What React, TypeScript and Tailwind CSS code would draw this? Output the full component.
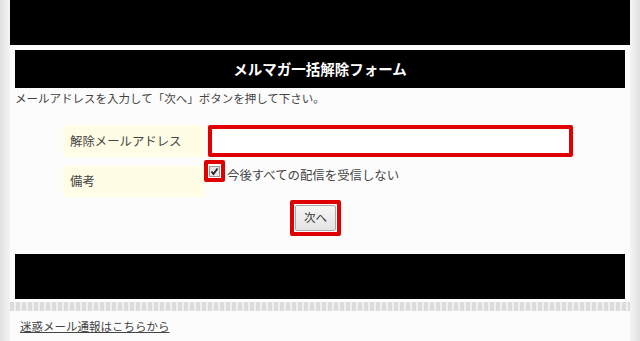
import React from "react";

export default function App() {
  const font = { fontFamily: '"Noto Sans CJK JP", "Noto Sans", sans-serif' };
  return (
    <div className="w-[640px] h-[341px] overflow-hidden flex bg-white" style={font}>
      <div className="w-[10px] shrink-0 bg-gradient-to-r from-[#e2e2e2] to-[#f4f4f4]" />
      <div className="flex-1 flex flex-col bg-[#fcfcfc]">
        <div className="h-[45px] bg-black" />
        <div className="h-[5px]" />
        <div className="mx-[5px] h-[38px] bg-black flex items-center justify-center">
          <span className="text-white text-[14.5px] font-bold leading-none">メルマガ一括解除フォーム</span>
        </div>
        <div className="px-[5px] text-[11.5px] leading-[20px] text-[#444] h-[20px]">
          メールアドレスを入力して「次へ」ボタンを押して下さい。
        </div>
        <div className="h-[17px]" />
        <div className="flex items-stretch pl-[53px] h-[32px]">
          <div className="w-[142px] bg-[#fffde6] flex items-center pl-[7px] text-[12.4px] text-[#444]">
            解除メールアドレス
          </div>
          <div className="ml-[3px] w-[365px] border-[4px] border-[#e00000] rounded-[2px] bg-white" />
        </div>
        <div className="flex pl-[53px] h-[40px] relative">
          <div className="mt-[9px] w-[142px] h-[31px] bg-[#fffde6] flex items-center pl-[7px] text-[12.4px] text-[#444]">
            備考
          </div>
          <div className="flex items-start mt-[3px]">
            <div className="w-[21px] h-[22px] -ml-[1px] border-[4px] border-[#e00000] rounded-[2px] flex items-center justify-center bg-white">
              <div className="w-[11px] h-[11px] bg-[#e6e6e6] border border-[#999] flex items-center justify-center">
                <svg width="9" height="9" viewBox="0 0 9 9">
                  <path d="M1.5 4.5 L3.5 7 L7.5 1.5" stroke="#222" strokeWidth="1.8" fill="none" />
                </svg>
              </div>
            </div>
            <span className="ml-[2px] mt-[8px] text-[12.4px] leading-[14px] text-[#444]">今後すべての配信を受信しない</span>
          </div>
        </div>
        <div className="flex justify-center h-[48px] pt-[3px]">
          <div className="mr-[9px] w-[51px] h-[36px] border-[4px] border-[#e00000] rounded-[2px] p-[1px] bg-white">
            <div className="w-full h-full bg-gradient-to-b from-[#f6f6f6] to-[#e4e4e4] border border-[#aaa] rounded-[2px] flex items-center justify-center text-[11.5px] text-[#333]">
              次へ
            </div>
          </div>
        </div>
        <div className="h-[9px]" />
        <div className="mx-[5px] h-[45px] bg-black" />
        <div className="h-[3px]" />
        <div className="h-[9px] bg-[repeating-linear-gradient(90deg,#dcdcdc_0px,#dcdcdc_4px,#f0f0f0_4px,#f0f0f0_6px)]" />
        <div className="px-[10px] pt-[7px] text-[11.5px] text-[#444] underline">迷惑メール通報はこちらから</div>
      </div>
      <div className="w-[10px] shrink-0 bg-gradient-to-r from-[#f4f4f4] to-[#e2e2e2]" />
    </div>
  );
}
